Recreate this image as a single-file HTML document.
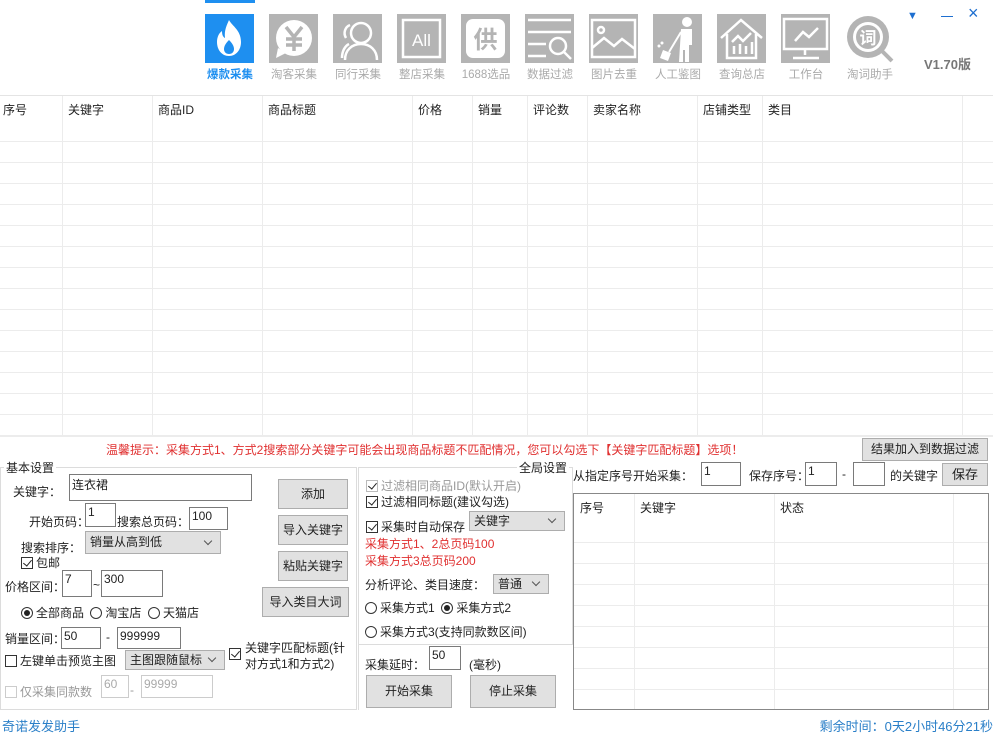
<!DOCTYPE html>
<html><head><meta charset="utf-8"><style>
*{box-sizing:border-box;margin:0;padding:0}
body{width:993px;height:733px;background:#fff;position:relative;overflow:hidden;font-family:"Liberation Sans","Noto Sans CJK SC",sans-serif;font-size:12px;color:#222}
.a{position:absolute;white-space:nowrap}
.tile{position:absolute;top:14px;width:49px;height:49px;background:#b4b4b4}
.lbl{position:absolute;top:66px;width:64px;text-align:center;font-size:11.5px;color:#aaa}
.inp{position:absolute;border:1px solid #7a7a7a;background:#fff;height:23px;padding:1px 2px;font-size:12px}
.btn{position:absolute;border:1px solid #adadad;background:#e1e1e1;text-align:center;font-size:12px}
.sel{position:absolute;border:1px solid #adadad;background:#e1e1e1;height:21px;padding:1px 4px;font-size:12px}
.sel:after{content:"";position:absolute;right:9px;top:50%;margin-top:-5px;width:5px;height:5px;border:solid #555;border-width:0 1px 1px 0;transform:rotate(45deg)}
.cb{display:inline-block;width:12px;height:12px;border:1px solid #333;vertical-align:-2px;margin-right:3px;position:relative;background:#fff}
.cb.k:after{content:"";position:absolute;left:3px;top:0;width:4px;height:7px;border:solid #222;border-width:0 1.5px 1.5px 0;transform:rotate(40deg)}
.rd{display:inline-block;width:12px;height:12px;border:1px solid #333;border-radius:50%;vertical-align:-2px;margin-right:3px;position:relative;background:#fff}
.rd.k:after{content:"";position:absolute;left:2px;top:2px;width:6px;height:6px;border-radius:50%;background:#222}
.red{color:#e03030}
</style></head><body>
<div class="a" style="left:205px;top:0;width:50px;height:3px;background:#1e8ff0"></div>
<div class="tile" style="left:205px;background:#1e8ff0"><svg width="49" height="49" viewBox="0 0 49 49"><path d="M24 6c3 6 12 10 12 22 0 8-5 14-12 14s-12-6-12-14c0-5 2-9 5-11 0 4 1 6 3 7-1-8 2-13 4-18z" fill="#fff"/><path d="M24 26c-3 3-5 6-5 9 0 3 2 5 5 5s5-2 5-5c0-3-2-6-5-9z" fill="#1e8ff0"/></svg></div>
<div class="tile" style="left:269px"><svg width="49" height="49"><circle cx="25" cy="24" r="18" fill="#fff"/><path d="M9 34l-2 10 10-5z" fill="#fff"/><path d="M17 13l8 10 8-10M25 23v14M17 25h16M17 31h16" stroke="#b4b4b4" stroke-width="3.5" fill="none"/></svg></div>
<div class="tile" style="left:333px"><svg width="49" height="49" fill="none" stroke="#fff" stroke-width="2.5"><circle cx="28" cy="19" r="10"/><path d="M12 46c0-10 7-16 16-16s16 6 16 16"/><path d="M17 11c-5 2-7 8-4 13M9 44c0-7 3-12 7-14"/></svg></div>
<div class="tile" style="left:397px"><svg width="49" height="49"><rect x="6" y="6" width="37" height="37" fill="none" stroke="#fff" stroke-width="2.5"/><text x="24.5" y="32" font-size="17" fill="#fff" text-anchor="middle" font-family="Liberation Sans">All</text></svg></div>
<div class="tile" style="left:461px"><svg width="49" height="49"><rect x="5" y="5" width="39" height="39" rx="7" fill="#fff"/><text x="24.5" y="34" font-size="24" fill="#b4b4b4" text-anchor="middle" font-family="Noto Sans CJK SC" font-weight="bold">供</text></svg></div>
<div class="tile" style="left:525px"><svg width="49" height="49" stroke="#fff" stroke-width="2.5" fill="none"><path d="M3 6h43M3 18h43M3 30h18M3 42h18"/><circle cx="33" cy="32" r="8"/><path d="M39 38l7 7"/></svg></div>
<div class="tile" style="left:589px"><svg width="49" height="49" stroke="#fff" stroke-width="2.5" fill="none"><rect x="3" y="6" width="43" height="37"/><circle cx="12" cy="16" r="3"/><path d="M3 34l12-10 10 8 8-7 13 10"/></svg></div>
<div class="tile" style="left:653px"><svg width="49" height="49" fill="#fff"><circle cx="34" cy="8" r="5"/><path d="M28 15h11v16h-3v17h-4v-12h-2v12h-4z"/><path d="M28 18l-12 20" stroke="#fff" stroke-width="2"/><path d="M10 36l8 3-3 8-8-3z"/><circle cx="6" cy="32" r="1.5"/><circle cx="9" cy="29" r="1.5"/></svg></div>
<div class="tile" style="left:717px"><svg width="49" height="49" stroke="#fff" stroke-width="2.5" fill="none"><path d="M4 24L24 6l21 18M10 20v24h29V20"/><path d="M15 28l6-6 5 5 8-8M17 40v-8M23 40v-10M29 40v-8M35 40v-12"/></svg></div>
<div class="tile" style="left:781px"><svg width="49" height="49" stroke="#fff" stroke-width="2.5" fill="none"><rect x="3" y="5" width="43" height="30"/><path d="M14 27l8-9 6 5 9-9M24 35v6M12 44h26"/></svg></div>
<div class="tile" style="left:845px;background:#fff"><svg width="49" height="49"><circle cx="23" cy="23" r="21" fill="#b4b4b4"/><circle cx="23" cy="23" r="15" fill="#fff"/><circle cx="23" cy="23" r="12" fill="#b4b4b4"/><path d="M37 37l10 10" stroke="#b4b4b4" stroke-width="4"/><text x="23" y="30" font-size="17" fill="#fff" text-anchor="middle" font-family="Noto Sans CJK SC" font-weight="bold">词</text></svg></div>
<div class="lbl" style="left:198px;color:#1e8ff0;font-weight:bold">爆款采集</div>
<div class="lbl" style="left:262px">淘客采集</div>
<div class="lbl" style="left:326px">同行采集</div>
<div class="lbl" style="left:390px">整店采集</div>
<div class="lbl" style="left:454px">1688选品</div>
<div class="lbl" style="left:518px">数据过滤</div>
<div class="lbl" style="left:582px">图片去重</div>
<div class="lbl" style="left:646px">人工鉴图</div>
<div class="lbl" style="left:710px">查询总店</div>
<div class="lbl" style="left:774px">工作台</div>
<div class="lbl" style="left:838px">淘词助手</div>
<div class="a" style="left:924px;top:54px;font-size:13px;font-weight:bold;color:#777">V1.70版</div>
<div class="a" style="left:907px;top:10px;color:#1e6fd0;font-size:11px">▼</div>
<div class="a" style="left:941px;top:16px;width:12px;height:1px;background:#1e6fd0"></div>
<div class="a" style="left:968px;top:3px;color:#1e6fd0;font-size:18px;font-weight:lighter">×</div>
<div class="a" style="left:0;top:95px;width:993px;height:342px;border-top:1px solid #e4e4e4;
background:repeating-linear-gradient(to bottom,transparent 0,transparent 20px,#ececec 20px,#ececec 21px);background-position:0 46px;background-size:100% 21px"></div>
<div class="a" style="left:0;top:96px;width:993px;height:46px;background:#fff"></div>
<div class="a" style="left:0;top:141px;width:993px;height:1px;background:#ececec"></div>
<div class="a" style="left:0;top:436px;width:993px;height:1px;background:#ececec"></div>
<div class="a" style="left:62px;top:96px;width:1px;height:341px;background:#ececec"></div>
<div class="a" style="left:152px;top:96px;width:1px;height:341px;background:#ececec"></div>
<div class="a" style="left:262px;top:96px;width:1px;height:341px;background:#ececec"></div>
<div class="a" style="left:412px;top:96px;width:1px;height:341px;background:#ececec"></div>
<div class="a" style="left:472px;top:96px;width:1px;height:341px;background:#ececec"></div>
<div class="a" style="left:527px;top:96px;width:1px;height:341px;background:#ececec"></div>
<div class="a" style="left:587px;top:96px;width:1px;height:341px;background:#ececec"></div>
<div class="a" style="left:697px;top:96px;width:1px;height:341px;background:#ececec"></div>
<div class="a" style="left:762px;top:96px;width:1px;height:341px;background:#ececec"></div>
<div class="a" style="left:962px;top:96px;width:1px;height:341px;background:#ececec"></div>
<div class="a" style="left:3px;top:101px">序号</div>
<div class="a" style="left:68px;top:101px">关键字</div>
<div class="a" style="left:158px;top:101px">商品ID</div>
<div class="a" style="left:268px;top:101px">商品标题</div>
<div class="a" style="left:418px;top:101px">价格</div>
<div class="a" style="left:478px;top:101px">销量</div>
<div class="a" style="left:533px;top:101px">评论数</div>
<div class="a" style="left:593px;top:101px">卖家名称</div>
<div class="a" style="left:703px;top:101px">店铺类型</div>
<div class="a" style="left:768px;top:101px">类目</div>
<div class="a red" style="left:106px;top:441px">温馨提示：采集方式1、方式2搜索部分关键字可能会出现商品标题不匹配情况，您可以勾选下【关键字匹配标题】选项！</div>
<div class="btn" style="left:862px;top:438px;width:126px;height:23px;line-height:21px">结果加入到数据过滤</div>
<div class="a" style="left:0;top:467px;width:357px;height:243px;border:1px solid #dcdcdc"></div>
<div class="a" style="left:4px;top:459px;background:#fff;padding:0 2px">基本设置</div>
<div class="a" style="left:13px;top:483px">关键字：</div>
<div class="inp" style="left:69px;top:474px;width:183px;height:27px">连衣裙</div>
<div class="btn" style="left:278px;top:479px;width:70px;height:30px;line-height:28px">添加</div>
<div class="btn" style="left:278px;top:515px;width:70px;height:30px;line-height:28px">导入关键字</div>
<div class="btn" style="left:278px;top:551px;width:70px;height:30px;line-height:28px">粘贴关键字</div>
<div class="btn" style="left:262px;top:587px;width:87px;height:30px;line-height:28px">导入类目大词</div>
<div class="a" style="left:29px;top:513px">开始页码：</div>
<div class="inp" style="left:85px;top:503px;width:31px;height:24px">1</div>
<div class="a" style="left:117px;top:513px">搜索总页码：</div>
<div class="inp" style="left:189px;top:507px;width:39px;height:23px">100</div>
<div class="a" style="left:21px;top:539px">搜索排序：</div>
<div class="sel" style="left:85px;top:531px;width:136px;height:23px">销量从高到低</div>
<div class="a" style="left:21px;top:554px"><span class="cb k"></span>包邮</div>
<div class="a" style="left:5px;top:578px">价格区间：</div>
<div class="inp" style="left:62px;top:570px;width:30px;height:27px">7</div>
<div class="a" style="left:93px;top:578px">~</div>
<div class="inp" style="left:101px;top:570px;width:62px;height:27px">300</div>
<div class="a" style="left:21px;top:604px"><span class="rd k"></span>全部商品 <span class="rd" style="margin-left:3px"></span>淘宝店 &nbsp;<span class="rd"></span>天猫店</div>
<div class="a" style="left:5px;top:630px">销量区间：</div>
<div class="inp" style="left:61px;top:627px;width:40px;height:22px">50</div>
<div class="a" style="left:106px;top:630px">-</div>
<div class="inp" style="left:117px;top:627px;width:64px;height:22px">999999</div>
<div class="a" style="left:5px;top:652px"><span class="cb"></span>左键单击预览主图</div>
<div class="sel" style="left:125px;top:650px;width:100px;height:20px;padding-top:0">主图跟随鼠标</div>
<div class="a" style="left:229px;top:640px;line-height:16px"><span class="cb k" style="position:absolute;top:8px"></span><span style="margin-left:16px;display:inline-block">关键字匹配标题(针<br>对方式1和方式2)</span></div>
<div class="a" style="left:5px;top:683px;color:#999"><span class="cb" style="border-color:#ccc"></span>仅采集同款数</div>
<div class="inp" style="left:101px;top:675px;width:28px;border-color:#ccc;color:#aaa">60</div>
<div class="a" style="left:130px;top:683px;color:#999">-</div>
<div class="inp" style="left:141px;top:675px;width:72px;border-color:#ccc;color:#aaa">99999</div>
<div class="a" style="left:358px;top:467px;width:215px;height:178px;border:1px solid #dcdcdc"></div>
<div class="a" style="left:358px;top:645px;width:1px;height:65px;background:#dcdcdc"></div>
<div class="a" style="left:517px;top:459px;background:#fff;padding:0 2px">全局设置</div>
<div class="a" style="left:366px;top:477px;color:#999"><span class="cb k" style="border-color:#bbb"></span>过滤相同商品ID(默认开启)</div>
<div class="a" style="left:366px;top:493px"><span class="cb k"></span>过滤相同标题(建议勾选)</div>
<div class="a" style="left:366px;top:518px"><span class="cb k"></span>采集时自动保存</div>
<div class="sel" style="left:469px;top:511px;width:96px;height:20px;padding-top:0">关键字</div>
<div class="a red" style="left:365px;top:535px">采集方式1、2总页码100</div>
<div class="a red" style="left:365px;top:552px">采集方式3总页码200</div>
<div class="a" style="left:365px;top:576px">分析评论、类目速度：</div>
<div class="sel" style="left:493px;top:574px;width:56px;height:20px;padding-top:0">普通</div>
<div class="a" style="left:365px;top:599px"><span class="rd"></span>采集方式1 &nbsp;<span class="rd k"></span>采集方式2</div>
<div class="a" style="left:365px;top:623px"><span class="rd"></span>采集方式3(支持同款数区间)</div>
<div class="a" style="left:365px;top:656px">采集延时：</div>
<div class="inp" style="left:429px;top:646px;width:32px;height:24px">50</div>
<div class="a" style="left:469px;top:656px">(毫秒)</div>
<div class="btn" style="left:366px;top:675px;width:86px;height:33px;line-height:31px">开始采集</div>
<div class="btn" style="left:470px;top:675px;width:86px;height:33px;line-height:31px">停止采集</div>
<div class="a" style="left:573px;top:467px">从指定序号开始采集：</div>
<div class="inp" style="left:701px;top:462px;width:40px;height:24px">1</div>
<div class="a" style="left:749px;top:467px">保存序号：</div>
<div class="inp" style="left:805px;top:462px;width:32px;height:24px">1</div>
<div class="a" style="left:842px;top:467px">-</div>
<div class="inp" style="left:853px;top:462px;width:32px;height:24px"></div>
<div class="a" style="left:890px;top:467px">的关键字</div>
<div class="btn" style="left:942px;top:463px;width:46px;height:23px;line-height:21px;font-size:13px">保存</div>
<div class="a" style="left:573px;top:493px;width:416px;height:217px;border:1px solid #888;
background:repeating-linear-gradient(to bottom,transparent 0,transparent 20px,#ececec 20px,#ececec 21px);background-position:0 28px"></div>
<div class="a" style="left:574px;top:494px;width:414px;height:27px;background:#fff"></div>
<div class="a" style="left:634px;top:494px;width:1px;height:215px;background:#ececec"></div>
<div class="a" style="left:774px;top:494px;width:1px;height:215px;background:#ececec"></div>
<div class="a" style="left:953px;top:494px;width:1px;height:215px;background:#ececec"></div>
<div class="a" style="left:580px;top:499px">序号</div>
<div class="a" style="left:640px;top:499px">关键字</div>
<div class="a" style="left:780px;top:499px">状态</div>
<div class="a" style="left:2px;top:716px;color:#2a7fc8;font-size:13px">奇诺发发助手</div>
<div class="a" style="right:0;top:716px;color:#2a7fc8;font-size:13px">剩余时间：0天2小时46分21秒</div>
</body></html>
